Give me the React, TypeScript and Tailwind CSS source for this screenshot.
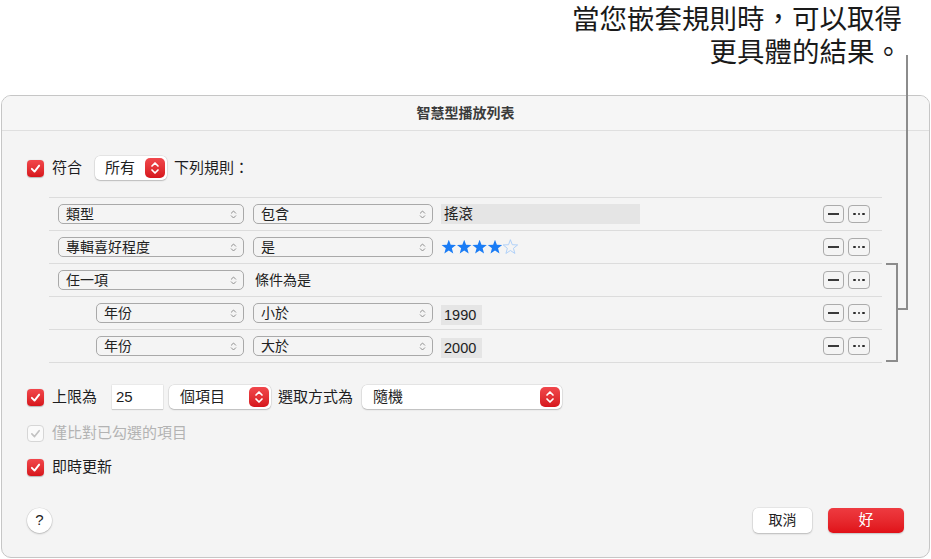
import React from "react";

const FONT = "font-['Liberation_Sans','Noto_Sans_CJK_TC',sans-serif]";

function Check({ disabled }: { disabled?: boolean }) {
  if (disabled) {
    return (
      <div className="w-[17px] h-[17px] rounded-[4px] bg-[#fafafa] border border-[#d6d6d6] flex items-center justify-center">
        <svg width="13" height="13" viewBox="0 0 16 16">
          <path d="M3.5 8.5 L6.8 11.8 L12.5 4.5" fill="none" stroke="#c2c2c2" strokeWidth="2" strokeLinecap="round" strokeLinejoin="round" />
        </svg>
      </div>
    );
  }
  return (
    <div className="w-[17px] h-[17px] rounded-[4px] bg-linear-to-b from-[#f2464b] to-[#d7131a] flex items-center justify-center shadow-[0_0.5px_1px_rgba(0,0,0,0.25)]">
      <svg width="13" height="13" viewBox="0 0 16 16">
        <path d="M3.5 8.5 L6.8 11.8 L12.5 4.5" fill="none" stroke="#ffffff" strokeWidth="2.4" strokeLinecap="round" strokeLinejoin="round" />
      </svg>
    </div>
  );
}

function RedStepper() {
  return (
    <div className="w-[20px] h-[20px] rounded-[5px] bg-linear-to-b from-[#f1474c] to-[#d6141b] flex items-center justify-center">
      <svg width="10" height="14" viewBox="0 0 10 14">
        <path d="M2 5 L5 2 L8 5" fill="none" stroke="#fff" strokeWidth="1.7" strokeLinecap="round" strokeLinejoin="round" />
        <path d="M2 9 L5 12 L8 9" fill="none" stroke="#fff" strokeWidth="1.7" strokeLinecap="round" strokeLinejoin="round" />
      </svg>
    </div>
  );
}

function RedPopup({ label, w, pl }: { label: string; w: string; pl: string }) {
  return (
    <div className={`${w} ${pl} h-[24px] rounded-[5px] bg-white shadow-[0_0_0_0.5px_rgba(0,0,0,0.12),0_1px_1.5px_rgba(0,0,0,0.18)] flex items-center justify-between pr-[2px]`}>
      <span className="text-[15px] leading-[20px] text-[#1f1f1f]">{label}</span>
      <RedStepper />
    </div>
  );
}

function SmallChevron() {
  return (
    <svg width="7" height="11" viewBox="0 0 8 12">
      <path d="M1.5 4.5 L4 2 L6.5 4.5" fill="none" stroke="#8a8a8a" strokeWidth="1.1" strokeLinecap="round" strokeLinejoin="round" />
      <path d="M1.5 7.5 L4 10 L6.5 7.5" fill="none" stroke="#8a8a8a" strokeWidth="1.1" strokeLinecap="round" strokeLinejoin="round" />
    </svg>
  );
}

function RulePopup({ label, w }: { label: string; w: string }) {
  return (
    <div className={`${w} h-[20px] rounded-[5px] border border-[#a9a9a9] flex items-center justify-between pl-[7px] pr-[6px] shrink-0`}>
      <span className="text-[14px] leading-[18px] text-[#222]">{label}</span>
      <SmallChevron />
    </div>
  );
}

function Field({ text, w }: { text: string; w: string }) {
  return (
    <div className={`${w} h-[20px] bg-[#e5e5e5] flex items-center pl-[3px] text-[14.5px] leading-[18px] text-[#222] shrink-0`}>
      {text}
    </div>
  );
}

function RowButtons() {
  return (
    <div className="ml-auto flex items-center gap-[4px]">
      <div className="w-[21px] h-[18px] rounded-[4px] border border-[#ababab] flex items-center justify-center">
        <div className="w-[11px] h-[1.5px] bg-[#3a3a3a]" />
      </div>
      <div className="w-[22px] h-[18px] rounded-[4px] border border-[#ababab] flex items-center justify-center gap-[2px]">
        <div className="w-[2.5px] h-[2.5px] rounded-full bg-[#2a2a2a]" />
        <div className="w-[2.5px] h-[2.5px] rounded-full bg-[#2a2a2a]" />
        <div className="w-[2.5px] h-[2.5px] rounded-full bg-[#2a2a2a]" />
      </div>
    </div>
  );
}

function Stars() {
  const pts = (cx: number) => {
    const arr: string[] = [];
    for (let i = 0; i < 10; i++) {
      const r = i % 2 === 0 ? 7.6 : 3.2;
      const a = (Math.PI / 5) * i - Math.PI / 2;
      arr.push(`${(cx + r * Math.cos(a)).toFixed(2)},${(8.3 + r * Math.sin(a)).toFixed(2)}`);
    }
    return arr.join(" ");
  };
  return (
    <svg width="82" height="16" viewBox="0 0 82 16">
      {[0, 1, 2, 3].map((i) => (
        <polygon key={i} points={pts(7.8 + i * 15.4)} fill="#1a7cf5" />
      ))}
      <polygon points={pts(7.8 + 4 * 15.4)} fill="none" stroke="#a9cdf8" strokeWidth="0.9" />
    </svg>
  );
}

function RuleRow({ children }: { children: React.ReactNode }) {
  return (
    <div className="h-[33px] border-b border-[#dcdcdc] flex items-center pl-[9px] pr-[12px]">
      {children}
      <RowButtons />
    </div>
  );
}

export default function App() {
  return (
    <div className={`relative w-[931px] h-[559px] bg-white overflow-hidden ${FONT} text-[#1d1d1f]`}>
      <div className="h-[95px] pt-[3px] pr-[29px] text-right text-[27.5px] leading-[33px] text-[#1a1a1a]">
        <div>當您嵌套規則時，可以取得</div>
        <div>更具體的結果。</div>
      </div>

      <div className="mx-[1px] h-[463px] rounded-[10px] border border-[#c6c6c6] bg-[#f4f4f4] flex flex-col overflow-hidden">
        <div className="h-[35px] shrink-0 bg-[#f6f6f6] border-b border-[#dfdfdf] flex items-center justify-center text-[14px] font-semibold text-[#3b3b3b]">
          智慧型播放列表
        </div>

        <div className="flex-1 flex flex-col pl-[25px] pr-[25px] pt-[25px] pb-[24px]">
          <div className="h-[24px] flex items-center">
            <Check />
            <span className="ml-[8px] text-[15px] leading-[20px]">符合</span>
            <div className="ml-[13px]">
              <RedPopup label="所有" w="w-[72px]" pl="pl-[10px]" />
            </div>
            <span className="ml-[7px] text-[15px] leading-[20px]">下列規則：</span>
          </div>

          <div className="mt-[17px] ml-[22px] w-[833px] border-t border-[#dcdcdc]">
            <RuleRow>
              <RulePopup label="類型" w="w-[186px]" />
              <div className="ml-[9px]"><RulePopup label="包含" w="w-[180px]" /></div>
              <div className="ml-[8px]"><Field text="搖滾" w="w-[199px]" /></div>
            </RuleRow>
            <RuleRow>
              <RulePopup label="專輯喜好程度" w="w-[186px]" />
              <div className="ml-[9px]"><RulePopup label="是" w="w-[180px]" /></div>
              <div className="ml-[8px] flex items-center"><Stars /></div>
            </RuleRow>
            <RuleRow>
              <RulePopup label="任一項" w="w-[186px]" />
              <span className="ml-[11px] text-[14px] leading-[18px] text-[#222]">條件為是</span>
            </RuleRow>
            <RuleRow>
              <div className="ml-[38px]"><RulePopup label="年份" w="w-[148px]" /></div>
              <div className="ml-[9px]"><RulePopup label="小於" w="w-[180px]" /></div>
              <div className="ml-[8px] mt-[3px]"><Field text="1990" w="w-[41px]" /></div>
            </RuleRow>
            <RuleRow>
              <div className="ml-[38px]"><RulePopup label="年份" w="w-[148px]" /></div>
              <div className="ml-[9px]"><RulePopup label="大於" w="w-[180px]" /></div>
              <div className="ml-[8px] mt-[3px]"><Field text="2000" w="w-[41px]" /></div>
            </RuleRow>
          </div>

          <div className="mt-[22px] h-[24px] flex items-center">
            <Check />
            <span className="ml-[8px] text-[15px] leading-[20px]">上限為</span>
            <div className="ml-[15px] w-[51px] h-[24px] bg-white shadow-[0_0_0_0.5px_rgba(0,0,0,0.08),0_1px_1px_rgba(0,0,0,0.12)] flex items-center pl-[4px] text-[15px]">
              25
            </div>
            <div className="ml-[6px]">
              <RedPopup label="個項目" w="w-[102px]" pl="pl-[11px]" />
            </div>
            <span className="ml-[7px] text-[15px] leading-[20px]">選取方式為</span>
            <div className="ml-[9px]">
              <RedPopup label="隨機" w="w-[200px]" pl="pl-[11px]" />
            </div>
          </div>

          <div className="mt-[12px] h-[24px] flex items-center">
            <Check disabled />
            <span className="ml-[8px] text-[15px] leading-[20px] text-[#b3b3b3]">僅比對已勾選的項目</span>
          </div>

          <div className="mt-[10px] h-[24px] flex items-center">
            <Check />
            <span className="ml-[8px] text-[15px] leading-[20px]">即時更新</span>
          </div>

          <div className="mt-auto flex items-center justify-between">
            <div className="w-[25px] h-[25px] rounded-full bg-white shadow-[0_0_0_0.5px_rgba(0,0,0,0.1),0_1px_2px_rgba(0,0,0,0.2)] flex items-center justify-center text-[15px] text-[#222]">
              ?
            </div>
            <div className="flex items-center gap-[16px]">
              <div className="w-[59px] h-[25px] rounded-[5px] bg-white shadow-[0_0_0_0.5px_rgba(0,0,0,0.1),0_1px_2px_rgba(0,0,0,0.2)] flex items-center justify-center text-[14px] text-[#222]">
                取消
              </div>
              <div className="w-[76px] h-[25px] rounded-[5px] bg-linear-to-b from-[#ee3a40] to-[#e00f17] shadow-[0_1px_1.5px_rgba(0,0,0,0.2)] flex items-center justify-center text-[15px] text-white">
                好
              </div>
            </div>
          </div>
        </div>
      </div>

      <div className="absolute left-[906px] top-[55px] w-[2px] h-[255px] bg-[#8c8c8c]" />
      <div className="absolute left-[897px] top-[308px] w-[11px] h-[2px] bg-[#8c8c8c]" />
      <div className="absolute left-[886px] top-[263px] w-[12px] h-[99px] border-2 border-l-0 border-[#8c8c8c]" />
    </div>
  );
}
